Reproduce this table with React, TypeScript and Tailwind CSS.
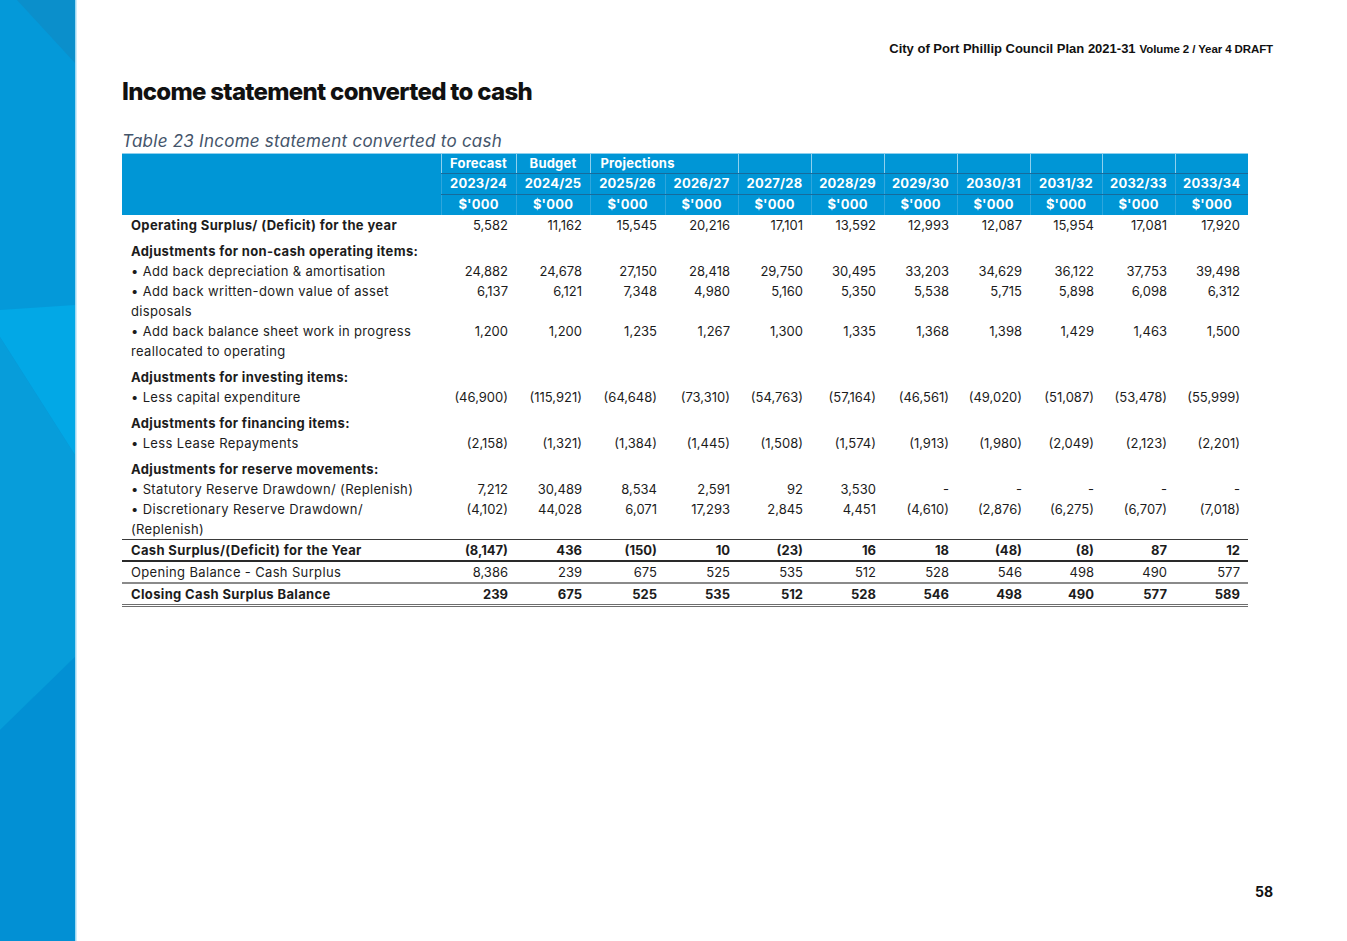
import React from 'react';

type Row = {
    label: string[];
    values?: string[];
    kind?: 'section' | 'bold' | 'item' | 'total' | 'opening' | 'closing';
};

const years = ['2023/24', '2024/25', '2025/26', '2026/27', '2027/28', '2028/29', '2029/30', '2030/31', '2031/32', '2032/33', '2033/34'];
const colWidths = ['w-[75px]', 'w-[74px]', 'w-[75px]', 'w-[73px]', 'w-[73px]', 'w-[73px]', 'w-[73px]', 'w-[73px]', 'w-[72px]', 'w-[73px]', 'w-[73px]'];

const rows: Row[] = [
    { label: ['Operating Surplus/ (Deficit) for the year'], kind: 'bold', values: ['5,582', '11,162', '15,545', '20,216', '17,101', '13,592', '12,993', '12,087', '15,954', '17,081', '17,920'] },
    { label: ['Adjustments for non-cash operating items:'], kind: 'section' },
    { label: ['• Add back depreciation & amortisation'], values: ['24,882', '24,678', '27,150', '28,418', '29,750', '30,495', '33,203', '34,629', '36,122', '37,753', '39,498'] },
    { label: ['• Add back written-down value of asset', 'disposals'], values: ['6,137', '6,121', '7,348', '4,980', '5,160', '5,350', '5,538', '5,715', '5,898', '6,098', '6,312'] },
    { label: ['• Add back balance sheet work in progress', 'reallocated to operating'], values: ['1,200', '1,200', '1,235', '1,267', '1,300', '1,335', '1,368', '1,398', '1,429', '1,463', '1,500'] },
    { label: ['Adjustments for investing items:'], kind: 'section' },
    { label: ['• Less capital expenditure'], values: ['(46,900)', '(115,921)', '(64,648)', '(73,310)', '(54,763)', '(57,164)', '(46,561)', '(49,020)', '(51,087)', '(53,478)', '(55,999)'] },
    { label: ['Adjustments for financing items:'], kind: 'section' },
    { label: ['• Less Lease Repayments'], values: ['(2,158)', '(1,321)', '(1,384)', '(1,445)', '(1,508)', '(1,574)', '(1,913)', '(1,980)', '(2,049)', '(2,123)', '(2,201)'] },
    { label: ['Adjustments for reserve movements:'], kind: 'section' },
    { label: ['• Statutory Reserve Drawdown/ (Replenish)'], values: ['7,212', '30,489', '8,534', '2,591', '92', '3,530', '-', '-', '-', '-', '-'] },
    { label: ['• Discretionary Reserve Drawdown/', '(Replenish)'], values: ['(4,102)', '44,028', '6,071', '17,293', '2,845', '4,451', '(4,610)', '(2,876)', '(6,275)', '(6,707)', '(7,018)'] },
    { label: ['Cash Surplus/(Deficit) for the Year'], kind: 'total', values: ['(8,147)', '436', '(150)', '10', '(23)', '16', '18', '(48)', '(8)', '87', '12'] },
    { label: ['Opening Balance - Cash Surplus'], kind: 'opening', values: ['8,386', '239', '675', '525', '535', '512', '528', '546', '498', '490', '577'] },
    { label: ['Closing Cash Surplus Balance'], kind: 'closing', values: ['239', '675', '525', '535', '512', '528', '546', '498', '490', '577', '589'] },
];

function SideBar() {
    return (
        <div className="w-[77px] shrink-0 h-[941px]">
            <svg width="77" height="941" viewBox="0 0 77 941">
                <rect x="0" y="0" width="75" height="941" fill="#0499d9" />
                <polygon points="17,0 75,0 75,63" fill="#0b8fcb" />
                <polygon points="0,310 75,305 75,455 0,337" fill="#02a8e6" />
                <polygon points="0,337 75,455 75,657 0,730" fill="#079dda" />
                <polygon points="0,730 75,657 75,941 0,941" fill="#0290d4" />
                <rect x="75" y="0" width="1.5" height="941" fill="#9fd9f3" />
            </svg>
        </div>
    );
}

function HeaderRows() {
    const cellLine = 'border-l border-[#2ea6dc]';
    return (
        <thead className="text-white font-bold text-[13px] tracking-[0.2px]">
            <tr className="h-[20px] bg-[#0096d6]">
                <th className="border-t border-[#8fd0ee]" />
                <th className={`${cellLine} text-center border-t border-[#8fd0ee] border-b border-b-[#176b9c]`}>Forecast</th>
                <th className={`${cellLine} text-center border-t border-[#8fd0ee] border-b border-b-[#176b9c]`}>Budget</th>
                <th colSpan={2} className={`${cellLine} text-left pl-[10px] border-t border-[#8fd0ee] border-b border-b-[#176b9c]`}>Projections</th>
                {years.slice(4).map((y) => (
                    <th key={y} className={`${cellLine} border-t border-[#8fd0ee] border-b border-b-[#176b9c]`} />
                ))}
            </tr>
            <tr className="h-[20px] bg-[#0096d6]">
                <th />
                {years.map((y) => (
                    <th key={y} className={`${cellLine} text-center border-b border-b-[#176b9c]`}>{y}</th>
                ))}
            </tr>
            <tr className="h-[21px] bg-[#0096d6]">
                <th />
                {years.map((y) => (
                    <th key={y} className={`${cellLine} text-center`}>$'000</th>
                ))}
            </tr>
        </thead>
    );
}

function BodyRow({ row }: { row: Row }) {
    const kind = row.kind || 'item';
    const isBold = kind === 'bold' || kind === 'section' || kind === 'total' || kind === 'closing';
    const numBold = kind === 'total' || kind === 'closing';
    const pad = kind === 'section' ? 'pt-[6px]' : '';

    let border = '';
    if (kind === 'total') border = 'border-t border-t-[#3a3a3a] border-b-2 border-b-[#2a2a2a]';
    if (kind === 'opening') border = 'border-b-2 border-b-[#8a8a8a]';
    if (kind === 'closing') border = 'border-b-[3px] border-double border-b-[#6e6e6e]';

    return (
        <tr className={`${border} align-top`}>
            <td className={`pl-[9px] leading-[20px] tracking-[0.35px] ${pad} ${isBold ? 'font-bold' : ''}`}>
                {row.label.map((l) => (
                    <div key={l}>{l}</div>
                ))}
            </td>
            {years.map((y, i) => (
                <td key={y} className={`text-right pr-[8px] leading-[20px] ${pad} ${numBold ? 'font-bold' : ''}`}>
                    {row.values ? row.values[i] : ''}
                </td>
            ))}
        </tr>
    );
}

export default function App() {
    return (
        <div className="flex w-[1347px] h-[941px] bg-white overflow-hidden" style={{ fontFamily: 'Inter, "Noto Sans", sans-serif' }}>
            <SideBar />
            <div className="flex-1 flex flex-col pl-[45px] pr-[74px]">
                <div className="flex justify-end items-baseline pt-[39px] text-[#111] font-bold gap-[4px]" style={{ fontFamily: '"Liberation Sans", Arial, sans-serif' }}>
                    <span className="text-[13px]">City of Port Phillip Council Plan 2021-31</span>
                    <span className="text-[11.5px] tracking-[-0.1px]">Volume 2 / Year 4 DRAFT</span>
                </div>

                <h1 className="mt-[18px] text-[24px] leading-[30px] font-extrabold tracking-[-0.7px] text-[#111]">
                    Income statement converted to cash
                </h1>

                <p className="mt-[23px] text-[17px] leading-[22px] italic text-[#44546a] tracking-[0.25px]">
                    Table 23 Income statement converted to cash
                </p>

                <table className="mt-[1px] w-[1126px] table-fixed border-collapse text-[13px] text-[#1c1c1c]">
                    <colgroup>
                        <col className="w-[319px]" />
                        {colWidths.map((w, i) => (
                            <col key={years[i]} className={w} />
                        ))}
                    </colgroup>
                    <HeaderRows />
                    <tbody>
                        {rows.map((r) => (
                            <BodyRow key={r.label[0]} row={r} />
                        ))}
                    </tbody>
                </table>

                <div className="mt-auto mb-[39px] flex justify-end">
                    <span className="text-[14px] font-bold text-[#111]">58</span>
                </div>
            </div>
        </div>
    );
}
